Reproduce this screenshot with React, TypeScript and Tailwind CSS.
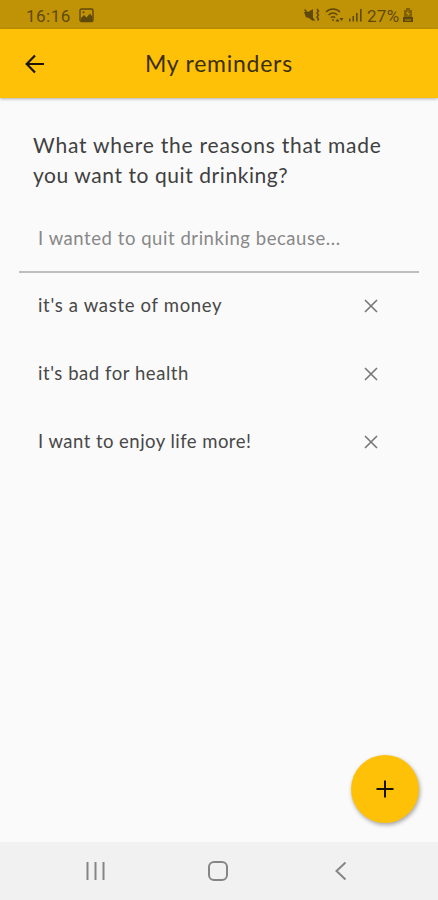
import { useState } from "react"

type Reason = {
  text: string
  tracking: string
}

const INITIAL_REASONS: Reason[] = [
  { text: "it's a waste of money", tracking: "tracking-[0.68px]" },
  { text: "it's bad for health", tracking: "tracking-[0.55px]" },
  { text: "I want to enjoy life more!", tracking: "tracking-[0.46px]" },
]

function StatusBar() {
  return (
    <div className="flex h-[29px] shrink-0 items-center bg-[#c09205] pl-[26px] pr-[24px] text-[#5f4908]">
      <span className="mt-[2px] w-[46px] whitespace-nowrap font-['Roboto',sans-serif] text-[17px] leading-5 tracking-[0.5px]">16:16</span>
      <svg className="ml-[7px] mt-px h-[15px] w-[15px]" viewBox="0 0 15 15" fill="none">
        <rect x="1" y="1" width="13" height="12.5" rx="1.5" stroke="currentColor" strokeWidth="1.4" />
        <path d="M2 12V10l3-3 2.5 2.5 3.5-4L13.5 9V13H2z" fill="currentColor" />
        <circle cx="4.5" cy="4.3" r="1" fill="currentColor" />
      </svg>

      <div className="ml-auto flex items-center">
        {/* Muted, vibrate */}
        <svg className="mt-px h-4 w-[16px]" viewBox="0 0 16 16" fill="none" stroke="currentColor">
          <path d="M0 5h4L9 2v12l-5-3.5H2z" fill="currentColor" stroke="none" />
          <path d="M.5 2.5l10 11" strokeWidth="1.5" />
          <path d="M13 2l1.5 2-1.5 2 1.5 2-1.5 2 1.5 2-1 1.5" strokeWidth="1.5" />
        </svg>
        {/* Wifi */}
        <svg className="ml-[5px] mt-px h-4 w-[20px]" viewBox="0 0 20 16" fill="none" stroke="currentColor" strokeWidth="1.5">
          <path d="M1 5c4-4 10-4 14 0" />
          <path d="M3.5 8c3-2.6 6-2.6 9 0" />
          <path d="M5.8 10.6c1.5-1.2 3-1.2 4.4 0" />
          <circle cx="8" cy="13" r="1" fill="currentColor" stroke="none" />
          <path d="M10.5 14.5l2-3 2 3zM14.5 11h4l-2 3z" fill="currentColor" stroke="none" />
        </svg>
        {/* Signal */}
        <svg className="ml-[3px] mt-px h-4 w-[15px]" viewBox="0 0 15 16" fill="currentColor">
          <rect x="1" y="11.5" width="1.5" height="3" />
          <rect x="4.5" y="9" width="1.5" height="5.5" />
          <rect x="8" y="6" width="1.6" height="8.5" />
          <rect x="12" y="2" width="1.6" height="12.5" />
        </svg>
        <span className="ml-[4px] mt-[2px] w-[34px] whitespace-nowrap font-['Roboto',sans-serif] text-[17px] leading-5 tracking-[0.3px]">27%</span>
        {/* Battery saver */}
        <svg className="ml-[1px] h-4 w-[12px]" viewBox="0 0 12 16">
          <path d="M4 1h4v2h2v7H2V3h2z" fill="currentColor" opacity=".65" />
          <path d="M1 10h10v5H1z" fill="currentColor" />
          <path d="M6.5 3L4 7h2l-.5 3L8 6H6z" fill="#c09205" />
          <path d="M3 13h6" stroke="#c09205" />
        </svg>
      </div>
    </div>
  )
}

function Header() {
  return (
    <header className="relative flex h-[69px] shrink-0 items-center bg-[#ffc107] shadow-[0_1px_3px_rgba(0,0,0,0.3)]">
      <button aria-label="Back" className="ml-[25px] h-5 w-5 text-[#1c1602]">
        <svg className="h-5 w-5" viewBox="0 0 20 20" fill="none" stroke="currentColor" strokeWidth="2.2">
          <path d="M19 10H2M10 1.5L1.7 10l8.3 8.5" />
        </svg>
      </button>
      <h1 className="mb-[2px] ml-[100px] whitespace-nowrap text-[23px] leading-7 tracking-[0.75px] text-[#3a2e09]">My reminders</h1>
    </header>
  )
}

function NavBar() {
  return (
    <nav className="flex h-[58px] shrink-0 items-center bg-[#f1f1f1] pl-[86px] text-[#858585]">
      <svg className="h-[20px] w-[19px]" viewBox="0 0 19 20" stroke="currentColor" strokeWidth="2">
        <path d="M1.5 1v18M9.5 1v18M17.5 1v18" />
      </svg>
      <svg className="ml-[102px] h-[22px] w-[22px]" viewBox="0 0 22 22" fill="none" stroke="currentColor" strokeWidth="2">
        <rect x="2" y="2" width="18" height="18" rx="5" />
      </svg>
      <svg className="ml-[105px] h-[20px] w-[13px]" viewBox="0 0 13 20" fill="none" stroke="currentColor" strokeWidth="2">
        <path d="M11.5 1.5L2.5 10l9 8.5" />
      </svg>
    </nav>
  )
}

export default function App() {
  const [reasons, setReasons] = useState(INITIAL_REASONS)
  const [draft, setDraft] = useState("")

  function handleAdd() {
    if (!draft.trim()) return
    setReasons((prev) => [...prev, { text: draft.trim(), tracking: "tracking-[0.55px]" }])
    setDraft("")
  }

  function handleRemove(index: number) {
    setReasons((prev) => prev.filter((_, i) => i !== index))
  }

  return (
    <div className="flex h-[900px] w-[438px] flex-col overflow-hidden bg-[#fafafa] font-['Lato',sans-serif]">
      <StatusBar />
      <Header />

      <main className="relative flex-1 px-[19px] pt-8">
        <h2 className="pl-[14px] text-[21px] leading-[30px] text-[#404040]">
          <span className="block whitespace-nowrap tracking-[0.78px]">What where the reasons that made</span>
          <span className="block whitespace-nowrap tracking-[0.57px]">you want to quit drinking?</span>
        </h2>

        <input
          value={draft}
          onChange={(e) => setDraft(e.target.value)}
          placeholder="I wanted to quit drinking because..."
          className="mt-[15px] block h-[68px] w-full border-b-2 border-[#bdbdbd] bg-transparent pl-[19px] text-[18.5px] tracking-[0.55px] outline-none placeholder:text-[#888888]"
        />

        <ul className="-mt-px">
          {reasons.map((reason, i) => (
            <li key={reason.text} className="flex h-[68px] items-center justify-between pl-[19px] pr-[41px]">
              <span className={`whitespace-nowrap text-[18.5px] text-[#484848] ${reason.tracking}`}>{reason.text}</span>
              <button aria-label="Remove" onClick={() => handleRemove(i)} className="h-[14px] w-[14px] text-[#777777]">
                <svg className="h-[14px] w-[14px]" viewBox="0 0 14 14" stroke="currentColor" strokeWidth="1.6">
                  <path d="M1 1l12 12M13 1L1 13" />
                </svg>
              </button>
            </li>
          ))}
        </ul>

        {/* Floating add button */}
        <button
          aria-label="Add"
          onClick={handleAdd}
          className="absolute bottom-[19px] right-[19px] flex h-[68px] w-[68px] items-center justify-center rounded-full bg-[#ffc107] text-[#171203] shadow-[1px_2px_4px_rgba(0,0,0,0.35)]"
        >
          <svg className="h-[18px] w-[18px]" viewBox="0 0 18 18" stroke="currentColor" strokeWidth="2">
            <path d="M9 .5v17M.5 9h17" />
          </svg>
        </button>
      </main>

      <NavBar />
    </div>
  )
}
